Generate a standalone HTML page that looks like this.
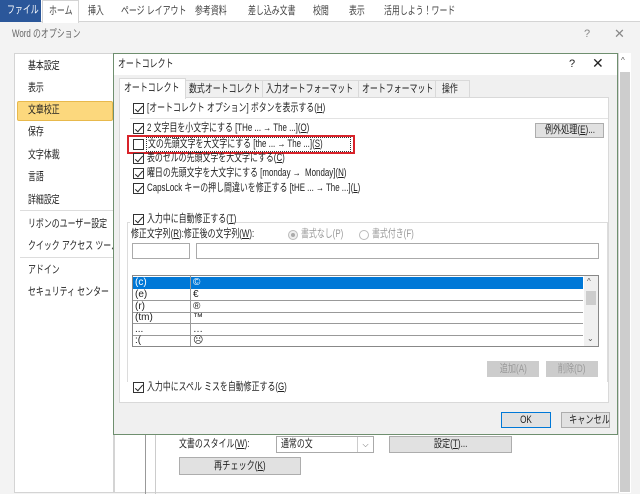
<!DOCTYPE html>
<html><head><meta charset="utf-8"><style>
*{margin:0;padding:0;box-sizing:border-box}
body{width:640px;height:487px;overflow:hidden;background:#f3f3f3;font-family:"Liberation Sans","Noto Sans CJK JP",sans-serif;font-size:11px;color:#222;position:relative}
.a{position:absolute;white-space:nowrap}
.t{position:absolute;white-space:nowrap;transform:scaleX(.72);transform-origin:0 0;line-height:13px}
.s{display:inline-block;transform:scaleX(.74);white-space:nowrap}
.cb{position:absolute;width:11px;height:11px;border:1px solid #333;background:#fff}
.cb.on::after{content:"";position:absolute;left:3px;top:0px;width:3px;height:7px;border:solid #222;border-width:0 1.3px 1.3px 0;transform:rotate(40deg)}
.btn{position:absolute;background:#e1e1e1;border:1px solid #adadad;text-align:center;line-height:14px;white-space:nowrap;overflow:hidden}
.row{position:absolute;left:133px;width:450px;height:12px;font-size:10px;line-height:11px;border-bottom:1px solid #999}
.row span{position:absolute;left:60px}
.row b{font-weight:normal;position:absolute;left:2px}
</style></head><body>
<div class="a" style="left:0;top:0;width:640px;height:22px;background:#fff;border-bottom:1px solid #d4d4d4"></div>
<div class="a" style="left:0;top:0;width:41px;height:22px;background:#2b579a"></div>
<div class="t" style="left:7px;top:4px;color:#fff">ファイル</div>
<div class="a" style="left:42px;top:0;width:37px;height:23px;background:#fff;border:1px solid #d4d4d4;border-bottom:none"></div>
<div class="t" style="left:49px;top:5px;color:#444">ホーム</div>
<div class="t" style="left:88px;top:5px;color:#444">挿入</div>
<div class="t" style="left:121px;top:5px;color:#444">ページ レイアウト</div>
<div class="t" style="left:195px;top:5px;color:#444">参考資料</div>
<div class="t" style="left:248px;top:5px;color:#444">差し込み文書</div>
<div class="t" style="left:313px;top:5px;color:#444">校閲</div>
<div class="t" style="left:349px;top:5px;color:#444">表示</div>
<div class="t" style="left:384px;top:5px;color:#444">活用しよう！ワード</div>
<div class="t" style="left:12px;top:28px;color:#666">Word のオプション</div>
<div class="a" style="left:584px;top:28px;color:#888">?</div>
<div class="a" style="left:614px;top:26px;color:#888;font-size:13px">✕</div>
<div class="a" style="left:14px;top:53px;width:100px;height:440px;background:#fff;border:1px solid #d4d4d4"></div>
<div class="a" style="left:17px;top:101px;width:96px;height:20px;background:#fcd87d;border:1px solid #e8b94c;border-radius:2px"></div>
<div class="t" style="left:28px;top:60px">基本設定</div>
<div class="t" style="left:28px;top:82px">表示</div>
<div class="t" style="left:28px;top:104px">文章校正</div>
<div class="t" style="left:28px;top:126px">保存</div>
<div class="t" style="left:28px;top:149px">文字体裁</div>
<div class="t" style="left:28px;top:171px">言語</div>
<div class="t" style="left:28px;top:194px">詳細設定</div>
<div class="a" style="left:20px;top:210px;width:93px;height:1px;background:#ddd"></div>
<div class="t" style="left:28px;top:218px">リボンのユーザー設定</div>
<div class="t" style="left:28px;top:240px">クイック アクセス ツール</div>
<div class="a" style="left:20px;top:257px;width:93px;height:1px;background:#ddd"></div>
<div class="t" style="left:28px;top:264px">アドイン</div>
<div class="t" style="left:28px;top:286px">セキュリティ センター</div>
<div class="a" style="left:114px;top:53px;width:505px;height:440px;background:#fff;border:1px solid #d4d4d4"></div>
<div class="a" style="left:145px;top:434px;width:1px;height:60px;background:#999"></div>
<div class="a" style="left:155px;top:434px;width:1px;height:60px;background:#ccc"></div>
<div class="t" style="left:179px;top:438px">文書のスタイル(<u>W</u>):</div>
<div class="a" style="left:276px;top:436px;width:98px;height:17px;background:#fff;border:1px solid #aaa"></div>
<div class="t" style="left:281px;top:438px">通常の文</div>
<div class="a" style="left:357px;top:437px;width:16px;height:15px;border-left:1px solid #ccc;text-align:center;font-size:8px;line-height:15px;color:#666">⌵</div>
<div class="btn" style="left:389px;top:436px;width:123px;height:17px"><span class="s">設定(<u>T</u>)...</span></div>
<div class="btn" style="left:179px;top:457px;width:122px;height:18px;line-height:16px"><span class="s">再チェック(<u>K</u>)</span></div>
<div class="a" style="left:619px;top:53px;width:12px;height:440px;background:#fff"></div>
<div class="a" style="left:620px;top:72px;width:10px;height:420px;background:#cdcdcd"></div>
<div class="a" style="left:621px;top:56px;font-size:8px;color:#555">^</div>
<div class="a" style="left:113px;top:53px;width:505px;height:382px;background:#f0f0f0;border:1px solid #6f8f6f"></div>
<div class="a" style="left:114px;top:54px;width:503px;height:21px;background:#fff"></div>
<div class="t" style="left:118px;top:58px">オートコレクト</div>
<div class="a" style="left:569px;top:58px">?</div>
<div class="a" style="left:592px;top:55px;font-size:14px">✕</div>
<div class="a" style="left:185px;top:80px;width:285px;height:17px;background:#f0f0f0;border:1px solid #d9d9d9;border-bottom:none"></div>
<div class="a" style="left:262px;top:80px;width:1px;height:17px;background:#d9d9d9"></div>
<div class="a" style="left:358px;top:80px;width:1px;height:17px;background:#d9d9d9"></div>
<div class="a" style="left:435px;top:80px;width:1px;height:17px;background:#d9d9d9"></div>
<div class="a" style="left:119px;top:97px;width:490px;height:306px;background:#fff;border:1px solid #d9d9d9"></div>
<div class="a" style="left:119px;top:78px;width:67px;height:21px;background:#fff;border:1px solid #d9d9d9;border-bottom:none"></div>
<div class="t" style="left:124px;top:82px">オートコレクト</div>
<div class="t" style="left:189px;top:83px">数式オートコレクト</div>
<div class="t" style="left:266px;top:83px">入力オートフォーマット</div>
<div class="t" style="left:362px;top:83px">オートフォーマット</div>
<div class="t" style="left:442px;top:83px">操作</div>
<div class="cb on" style="left:133px;top:103px"></div><div class="t" style="left:147px;top:102px">[オートコレクト オプション] ボタンを表示する(<u>H</u>)</div>
<div class="a" style="left:130px;top:118px;width:478px;height:1px;background:#e3e3e3"></div>
<div class="cb on" style="left:133px;top:123px"></div><div class="t" style="left:147px;top:122px">2 文字目を小文字にする [THe ... → The ...](<u>O</u>)</div>
<div class="btn" style="left:535px;top:123px;width:69px;height:15px;line-height:13px"><span class="s">例外処理(<u>E</u>)...</span></div>
<div class="a" style="left:127px;top:135px;width:228px;height:19px;border:2px solid #d8232a"></div>
<div class="cb" style="left:133px;top:139px"></div>
<div class="a" style="left:146px;top:137px;width:205px;height:15px;border:1px dotted #333"></div>
<div class="t" style="left:148px;top:138px">文の先頭文字を大文字にする [the ... → The ...](<u>S</u>)</div>
<div class="cb on" style="left:133px;top:153px"></div><div class="t" style="left:147px;top:152px">表のセルの先頭文字を大文字にする(<u>C</u>)</div>
<div class="cb on" style="left:133px;top:168px"></div><div class="t" style="left:147px;top:167px">曜日の先頭文字を大文字にする [monday →&nbsp; Monday](<u>N</u>)</div>
<div class="cb on" style="left:133px;top:183px"></div><div class="t" style="left:147px;top:182px">CapsLock キーの押し間違いを修正する [tHE ... → The ...](<u>L</u>)</div>
<div class="a" style="left:127px;top:222px;width:481px;height:160px;border:1px solid #dcdcdc;border-bottom:none"></div>
<div class="a" style="left:130px;top:213px;width:100px;height:14px;background:#fff"></div>
<div class="cb on" style="left:133px;top:214px"></div><div class="t" style="left:147px;top:213px">入力中に自動修正する(<u>T</u>)</div>
<div class="t" style="left:131px;top:228px">修正文字列(<u>R</u>):修正後の文字列(<u>W</u>):</div>
<div class="a" style="left:288px;top:230px;width:10px;height:10px;border:1px solid #bbb;border-radius:50%;background:#eee"><div style="margin:2px;width:4px;height:4px;border-radius:50%;background:#aaa"></div></div>
<div class="t" style="left:301px;top:228px;color:#999">書式なし(P)</div>
<div class="a" style="left:359px;top:230px;width:10px;height:10px;border:1px solid #bbb;border-radius:50%"></div>
<div class="t" style="left:372px;top:228px;color:#999">書式付き(F)</div>
<div class="a" style="left:132px;top:243px;width:58px;height:16px;border:1px solid #aaa;background:#fff"></div>
<div class="a" style="left:196px;top:243px;width:403px;height:16px;border:1px solid #aaa;background:#fff"></div>
<div class="a" style="left:132px;top:275px;width:467px;height:72px;border:1px solid #888;background:#fff"></div>
<div class="a" style="left:133px;top:277px;width:450px;height:11px;background:#0078d7"></div>
<div class="row" style="top:277px;color:#fff;border-bottom-color:#0078d7"><b>(c)</b><span>©</span></div>
<div class="row" style="top:289px"><b>(e)</b><span>€</span></div>
<div class="row" style="top:301px"><b>(r)</b><span>®</span></div>
<div class="row" style="top:312px"><b>(tm)</b><span>™</span></div>
<div class="row" style="top:324px"><b>...</b><span>…</span></div>
<div class="row" style="top:335px;border-bottom:none"><b>:(</b><span>☹</span></div>
<div class="a" style="left:190px;top:276px;width:1px;height:70px;background:#999"></div>
<div class="a" style="left:584px;top:276px;width:14px;height:70px;background:#f0f0f0"></div>
<div class="a" style="left:586px;top:291px;width:10px;height:14px;background:#cdcdcd"></div>
<div class="a" style="left:587px;top:277px;font-size:8px;color:#555">^</div>
<div class="a" style="left:587px;top:334px;font-size:8px;color:#555">⌄</div>
<div class="btn" style="left:487px;top:361px;width:52px;height:16px;color:#999;background:#ccc;border-color:#ccc"><span class="s">追加(A)</span></div>
<div class="btn" style="left:546px;top:361px;width:52px;height:16px;color:#999;background:#ccc;border-color:#ccc"><span class="s">削除(D)</span></div>
<div class="cb on" style="left:133px;top:382px"></div><div class="t" style="left:147px;top:381px">入力中にスペル ミスを自動修正する(<u>G</u>)</div>
<div class="btn" style="left:501px;top:412px;width:50px;height:16px;border:1px solid #0078d7;line-height:14px"><span class="s">OK</span></div>
<div class="btn" style="left:561px;top:412px;width:49px;height:16px"><span class="s">キャンセル</span></div>
</body></html>
